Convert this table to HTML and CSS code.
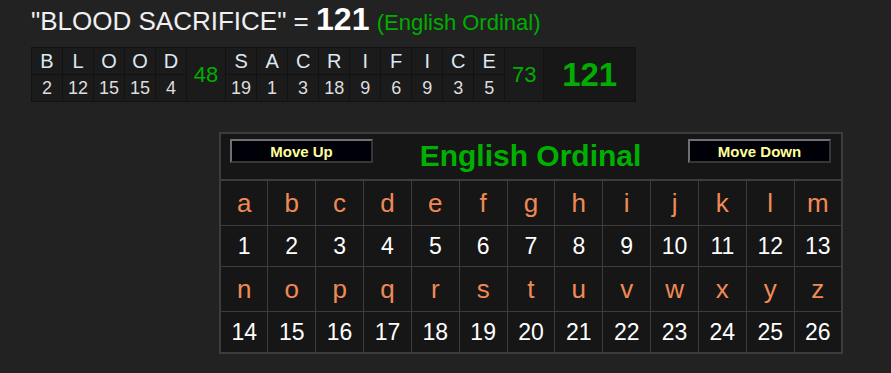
FILE: index.html
```html
<!DOCTYPE html><html>
<head>
<meta charset="UTF-8">
<link rel="stylesheet" href="styles.css">
<title>Gematria - English Ordinal</title>
</head>
<body>
  <div class="phrase">"BLOOD SACRIFICE" = <b class="phrase-sum">121</b> <span class="phrase-cipher">(English Ordinal)</span></div>

  <table class="breakdown">
    <tr>
      <td class="ch">B</td><td class="ch">L</td><td class="ch">O</td><td class="ch">O</td><td class="ch">D</td>
      <td class="word-sum" rowspan="2">48</td>
      <td class="ch">S</td><td class="ch">A</td><td class="ch">C</td><td class="ch">R</td><td class="ch">I</td><td class="ch">F</td><td class="ch">I</td><td class="ch">C</td><td class="ch">E</td>
      <td class="word-sum" rowspan="2">73</td>
      <td class="total" rowspan="2">121</td>
    </tr>
    <tr>
      <td class="val">2</td><td class="val">12</td><td class="val">15</td><td class="val">15</td><td class="val">4</td>
      <td class="val">19</td><td class="val">1</td><td class="val">3</td><td class="val">18</td><td class="val">9</td><td class="val">6</td><td class="val">9</td><td class="val">3</td><td class="val">5</td>
    </tr>
  </table>

  <table class="cipher">
    <tr>
      <th colspan="13" class="cipher-head">
        <div class="head-bar">
          <button class="move">Move Up</button>
          <span class="cipher-title">English Ordinal</span>
          <button class="move">Move Down</button>
        </div>
      </th>
    </tr>
    <tr class="letters">
      <td>a</td><td>b</td><td>c</td><td>d</td><td>e</td><td>f</td><td>g</td><td>h</td><td>i</td><td>j</td><td>k</td><td>l</td><td>m</td>
    </tr>
    <tr class="values">
      <td>1</td><td>2</td><td>3</td><td>4</td><td>5</td><td>6</td><td>7</td><td>8</td><td>9</td><td>10</td><td>11</td><td>12</td><td>13</td>
    </tr>
    <tr class="letters">
      <td>n</td><td>o</td><td>p</td><td>q</td><td>r</td><td>s</td><td>t</td><td>u</td><td>v</td><td>w</td><td>x</td><td>y</td><td>z</td>
    </tr>
    <tr class="values">
      <td>14</td><td>15</td><td>16</td><td>17</td><td>18</td><td>19</td><td>20</td><td>21</td><td>22</td><td>23</td><td>24</td><td>25</td><td>26</td>
    </tr>
  </table>
</body>
</html>
```

FILE: styles.css
```css
body {
  margin: 0;
  background-color: #222;
  font-family: 'Liberation Sans', Arial, sans-serif;
  color: #f0f0f0;
}

.phrase {
  padding: 5px 0 0 31px;
  font-size: 26px;
  line-height: 28px;
}
.phrase-sum {
  font-size: 32px;
  color: #fff;
}
.phrase-cipher {
  font-size: 22px;
  color: #00ad00;
}

/* word by word breakdown */
.breakdown {
  margin: 10px 0 0 31px;
  border-collapse: collapse;
  background-color: #1b1b1b;
}
.breakdown td {
  border: 1px solid #121212;
  text-align: center;
  padding: 0 5px;
  height: 26px;
  min-width: 20px;
}
.ch {
  font-size: 20px;
  color: #dce8f2;
}
.val {
  font-size: 18px;
  color: #ddd;
}
.word-sum {
  font-size: 22px;
  color: #00ad00;
  min-width: 28px !important;
}
.total {
  font-size: 33px;
  font-weight: bold;
  color: #00ad00;
  padding: 0 18px !important;
  background-color: #171717;
}

/* cipher chart */
.cipher {
  margin: 30px 0 0 219px;
  width: 624px;
  table-layout: fixed;
  border-collapse: collapse;
  border: 2px solid #3c3c3c;
  background-color: #161616;
}
.cipher td {
  border: 1px solid #3c3c3c;
  text-align: center;
  padding: 0;
}
.cipher-head {
  padding: 0;
  border-bottom: 2px solid #3c3c3c;
}
.head-bar {
  display: flex;
  justify-content: space-between;
  align-items: flex-start;
  height: 40px;
  padding: 5px 10px 0 9px;
}
.cipher-title {
  font-size: 30px;
  line-height: 33px;
  font-weight: bold;
  color: #00b000;
}
.move {
  width: 143px;
  height: 24px;
  padding: 0;
  background-color: #000008;
  border: 2px solid;
  border-color: #707070 #363636 #363636 #707070;
  color: #ffff99;
  font-family: 'Liberation Sans', Arial, sans-serif;
  font-size: 15px;
  font-weight: bold;
}
.letters td {
  height: 44px;
  font-size: 26px;
  color: #ef8a55;
}
.values td {
  height: 40px;
  font-size: 23px;
  color: #fff;
}
```
